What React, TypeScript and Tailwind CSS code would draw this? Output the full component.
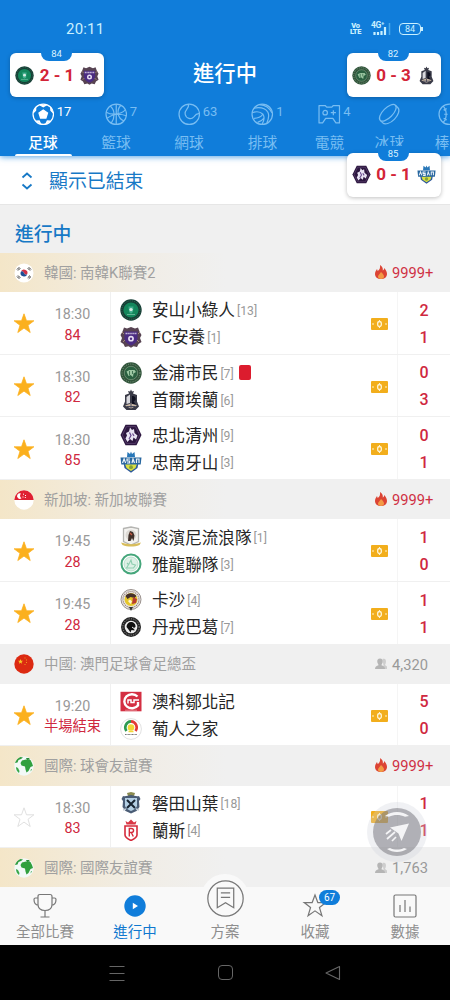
import type { ReactNode } from 'react';
import clsx from 'clsx';

type Team = { name: string; rank?: number; crest: string; score: number; red?: boolean };
type Match = { time: string; minute: string; starred: boolean; teams: [Team, Team] };
type League = {
    name: string;
    flag: string;
    viewers: string;
    hot: boolean;
    matches: Match[];
};

const leagues: League[] = [
    {
        name: '韓國: 南韓K聯賽2',
        flag: 'kr',
        viewers: '9999+',
        hot: true,
        matches: [
            {
                time: '18:30',
                minute: '84',
                starred: true,
                teams: [
                    { name: '安山小綠人', rank: 13, crest: 'ansan', score: 2 },
                    { name: 'FC安養', rank: 1, crest: 'anyang', score: 1 },
                ],
            },
            {
                time: '18:30',
                minute: '82',
                starred: true,
                teams: [
                    { name: '金浦市民', rank: 7, crest: 'gimpo', score: 0, red: true },
                    { name: '首爾埃蘭', rank: 6, crest: 'eland', score: 3 },
                ],
            },
            {
                time: '18:30',
                minute: '85',
                starred: true,
                teams: [
                    { name: '忠北清州', rank: 9, crest: 'cheongju', score: 0 },
                    { name: '忠南牙山', rank: 3, crest: 'asan', score: 1 },
                ],
            },
        ],
    },
    {
        name: '新加坡: 新加坡聯賽',
        flag: 'sg',
        viewers: '9999+',
        hot: true,
        matches: [
            {
                time: '19:45',
                minute: '28',
                starred: true,
                teams: [
                    { name: '淡濱尼流浪隊', rank: 1, crest: 'tampines', score: 1 },
                    { name: '雅龍聯隊', rank: 3, crest: 'geylang', score: 0 },
                ],
            },
            {
                time: '19:45',
                minute: '28',
                starred: true,
                teams: [
                    { name: '卡沙', rank: 4, crest: 'khalsa', score: 1 },
                    { name: '丹戎巴葛', rank: 7, crest: 'tanjong', score: 1 },
                ],
            },
        ],
    },
    {
        name: '中國: 澳門足球會足總盃',
        flag: 'cn',
        viewers: '4,320',
        hot: false,
        matches: [
            {
                time: '19:20',
                minute: '半場結束',
                starred: true,
                teams: [
                    { name: '澳科鄒北記', crest: 'cpk', score: 5 },
                    { name: '葡人之家', crest: 'casa', score: 0 },
                ],
            },
        ],
    },
    {
        name: '國際: 球會友誼賽',
        flag: 'world',
        viewers: '9999+',
        hot: true,
        matches: [
            {
                time: '18:30',
                minute: '83',
                starred: false,
                teams: [
                    { name: '磐田山葉', rank: 18, crest: 'jubilo', score: 1 },
                    { name: '蘭斯', rank: 4, crest: 'reims', score: 1 },
                ],
            },
        ],
    },
    { name: '國際: 國際友誼賽', flag: 'world', viewers: '1,763', hot: false, matches: [] },
];

const crests: Record<string, ReactNode> = {
    ansan: (
        <>
            <circle cx="11" cy="11" r="10.7" fill="#173f36" />
            <circle cx="11" cy="11" r="7.6" fill="#14875c" />
            <circle cx="11" cy="11" r="9.2" fill="none" stroke="#3a7460" strokeWidth=".8" strokeDasharray="1 1.2" />
            <path d="M8.5 7.5h5l-.6 5.5-1.9 1.8-1.9-1.8z" fill="#3fae8c" />
            <circle cx="11" cy="10.6" r="1.7" fill="#d6ece4" />
            <path d="M7 15.5h8" stroke="#62b597" strokeWidth="1" />
        </>
    ),
    anyang: (
        <>
            <path
                d="M4 1.5l3 1L11 1l4 1.5 3-1 1.5 4L21.5 9 20 12l1.5 4-3 2-1.5 3-3.5-.7L11 21.7l-2.5-1.4L5 21l-1.5-3-3-2L2 12 .5 9l2-3.5z"
                fill="#574352"
            />
            <path d="M4.5 5.5h13V12c0 4-3 6-6.5 7.5C7.5 18 4.5 16 4.5 12z" fill="#4b2c82" />
            <path d="M5.5 7.5h11" stroke="#c2b5d6" strokeWidth="1.5" strokeDasharray="1.5 .4" />
            <circle cx="11" cy="12.7" r="2.9" fill="#e5def1" />
            <circle cx="11" cy="12.7" r="1.2" fill="#4b2c82" />
            <path d="M2 6l2 2M20 6l-2 2M3 16l2-2M19 16l-2-2" stroke="#a58a78" strokeWidth="1" />
        </>
    ),
    gimpo: (
        <>
            <circle cx="11" cy="11" r="10.7" fill="#31543b" />
            <circle cx="11" cy="11" r="9" fill="none" stroke="#7f9c80" strokeWidth="1" strokeDasharray="1 1.3" />
            <circle cx="11" cy="11" r="6.7" fill="#2a6040" stroke="#8ca68c" strokeWidth=".6" />
            <path d="M6.500 9.500l3-1.500h5l1.500 2-2.500 1.500-.5 3.500-2.500-2-2 1z" fill="#9cc7a2" />
            <path d="M9.500 9v4M12.500 9v3" stroke="#2a6040" strokeWidth=".8" />
        </>
    ),
    eland: (
        <>
            <path d="M11 .5l1 2 2-.5-1 2.500 4 1.500v6.500l2 5-3.500 3.500h-9L3 17.500l2-5V6l4-1.500L8 2l2 .5z" fill="#3a3b48" />
            <path d="M6.500 8l3.500-2.500V14l-3.500 1z" fill="#d9d9de" />
            <path d="M12 7c3 0 4 2 3.500 4l-2 1.500 2 2.500H12z" fill="#0f1020" />
            <path d="M5 16.500l6-2 6 2-6 3z" fill="#cbb9a5" />
            <path d="M7 17.500h8M11 15v4" stroke="#45485c" strokeWidth="1" />
        </>
    ),
    cheongju: (
        <>
            <path d="M5.500 .8h11L21.500 11l-5 10.200h-11L.5 11z" fill="#2c163f" />
            <path d="M6.500 2.600h9L19.600 11l-4.100 8.400h-9L2.400 11z" fill="none" stroke="#6b5180" strokeWidth=".6" />
            <path d="M10 3.500l2 2.500 2-1 .5 4 3 2.500-1.500 4-2.500-2-1 3.500-2.500-2-2.500 3-2-3.500 1.500-3-1-2.500L9 7.500z" fill="#e8e3f3" />
            <path d="M9.500 8.500l1.500 3-2 3.500M12.500 9.500l1.500 2.500" stroke="#65468c" strokeWidth="1.2" fill="none" />
        </>
    ),
    asan: (
        <>
            <path d="M7.500 1l2.500 2 1-2.500 1 2.500 2.500-2 .5 5h-8z" fill="#2877b8" />
            <path d="M3 9h16l-1.500 8L11 21.800 4.500 17z" fill="#2b579a" />
            <path d="M5 13h12l-1.500 4L11 20l-4.500-3z" fill="#d9df42" />
            <path d="M.5 6.500h21l-.8 7H1.300z" fill="#27669f" />
            <path
                d="M2.500 12l1.600-4 1.500 4M10 8H7v2h2.500v2H7M12 12l1-4 1.500 4M16.500 12V8H19v4"
                stroke="#eef4f8"
                strokeWidth="1.2"
                fill="none"
            />
            <circle cx="11" cy="16.2" r="1.9" fill="#85a13a" />
        </>
    ),
    tampines: (
        <>
            <path d="M3.500 2.500L11 1l7.500 1.500v13L11 19l-7.500-3.500z" fill="#f4f3f0" stroke="#b5b5b2" strokeWidth="1.3" />
            <circle cx="11" cy="9" r="5.5" fill="#dedbd6" />
            <path d="M8 15l.5-6 1.500-4 3 1 1.500 3.500-1 5.500-1.500-3-1.500 3z" fill="#41302a" />
            <path d="M10 7l2 2" stroke="#c95a42" strokeWidth="1.2" />
            <path d="M1 16.500l4 1c4 1 8 1 12 0l4-1-1.500 2.500c-5 2-12 2-17 0z" fill="#d8bd5b" />
        </>
    ),
    geylang: (
        <>
            <circle cx="11" cy="11" r="9.5" fill="#fff" stroke="#45a67b" strokeWidth="2" />
            <circle cx="11" cy="11" r="7" fill="#ddf0e6" stroke="#a7d6bf" strokeWidth=".7" />
            <path d="M6.500 15l3-5 1.500-3 1 4 3.500 1-2 3zM7 10l2 2" fill="none" stroke="#8fceb0" strokeWidth="1.1" />
        </>
    ),
    khalsa: (
        <>
            <circle cx="11" cy="10.5" r="10" fill="#e9e6e3" stroke="#99908c" strokeWidth="1" />
            <circle cx="11" cy="10.5" r="8" fill="none" stroke="#8f7770" strokeWidth="1.2" strokeDasharray="1 1" />
            <circle cx="11" cy="10.5" r="6.5" fill="#e6c62b" />
            <path d="M5.500 7c2-3.500 8-4 11 0l-2 2-4-1-3 2z" fill="#45302b" />
            <path d="M13 8l4 2-1 4-4 1z" fill="#b93b30" />
            <path d="M8 12l2-1.500 2 2-1.500 2.500z" fill="#fff5d5" />
            <path d="M9 18h4l-2 4z" fill="#343434" />
        </>
    ),
    tanjong: (
        <>
            <circle cx="11" cy="11" r="10" fill="#252525" />
            <circle cx="11" cy="11" r="8.2" fill="none" stroke="#999" strokeWidth="1" strokeDasharray="1 1.4" />
            <circle cx="11" cy="11" r="6.3" fill="#eee" />
            <path d="M6.500 11c0-3 2-5 4.500-5s5 2 4.500 5l-1.500 1 .5 2.500-3-.5-1 2.500-2-3z" fill="#111" />
            <path d="M12 11l2 1.500" stroke="#eee" strokeWidth="1" />
        </>
    ),
    cpk: (
        <>
            <rect x=".5" y=".8" width="21" height="19.5" fill="#d42f42" />
            <path d="M17.500 5.500A7.600 7 0 1 0 18 14.500V11" fill="none" stroke="#fff" strokeWidth="2.4" />
            <path d="M8 12.500V9h3v2.500h3V9h5" fill="none" stroke="#fff" strokeWidth="1.5" />
            <path d="M5 19.200h12" stroke="#f0b9bf" strokeWidth=".6" />
        </>
    ),
    casa: (
        <>
            <circle cx="11" cy="11" r="10.4" fill="#fff" stroke="#d4d4d4" strokeWidth=".7" />
            <path d="M6.500 13a6 6 0 0 1 4.500-9.600" fill="none" stroke="#2d9b50" strokeWidth="2.6" />
            <path d="M11 3.400a6 6 0 0 1 4.500 9.600" fill="none" stroke="#e23c35" strokeWidth="2.6" />
            <circle cx="11" cy="9.5" r="3.3" fill="#f2d735" />
            <path d="M8.500 13.500h5" stroke="#f2d735" strokeWidth="1.5" />
            <path d="M5 16.500h12" stroke="#777" strokeWidth="1" strokeDasharray="1 .4" />
        </>
    ),
    jubilo: (
        <>
            <path d="M7 1l4-1 4 1-1 3H8z" fill="#8b8b51" />
            <path d="M3 4c3 1 5-1 8-1s5 2 8 1l1.500 3-1.500 2 .5 6-3 4-5.500 2.500L5.500 19l-3-4L3 9 1.500 7z" fill="#4a5c75" />
            <path d="M5 6h12v8c-1 3-4 4-6 5-2-1-5-2-6-5z" fill="#b4cfe4" />
            <path d="M7 8l8 8M15 8l-8 8" stroke="#172331" strokeWidth="2" />
            <path d="M3 18l3-1M19 18l-3-1" stroke="#c3cdd8" strokeWidth="1.5" />
        </>
    ),
    reims: (
        <>
            <path d="M5.500 2l2.500 1.500L11 .5l3 3L16.500 2l-1 3.500h-9z" fill="#d93745" />
            <path d="M5 7h12v9c0 2.500-3 4-6 5.500C8 20 5 18.500 5 16z" fill="#fff" stroke="#d52b3b" strokeWidth="1.6" />
            <path d="M9.300 17.500v-8h2c3 0 3 4 0 4h-2M11.300 13.500l2 4" fill="none" stroke="#d52b3b" strokeWidth="1.4" />
        </>
    ),
};

const flags: Record<string, ReactNode> = {
    kr: (
        <>
            <circle cx="10" cy="10" r="9.5" fill="#fff" />
            <path d="M6.700 9a3.400 3.400 0 0 1 6.600 2c-1.200 1.200-2.500.7-3.300-1s-2.300-2.200-3.300-1z" fill="#cf3247" />
            <path d="M6.700 9c1-1.200 2.500-.7 3.300 1s2.100 2.200 3.300 1A3.400 3.400 0 0 1 6.700 9z" fill="#1d4d94" />
            <path
                d="M3 6.500l2.300-2.300M4 7.500l2.300-2.300M17 6.500l-2.300-2.300M16 7.500l-2.300-2.300M3 13.500l2.300 2.300M4 12.500l2.300 2.300M17 13.500l-2.300 2.300M16 12.500l-2.300 2.300"
                stroke="#333"
                strokeWidth="1"
            />
        </>
    ),
    sg: (
        <>
            <circle cx="10" cy="10" r="9.7" fill="#fff" />
            <path d="M.3 10a9.700 9.700 0 0 1 19.400 0z" fill="#df2032" />
            <path d="M7 3.500a2.800 2.800 0 1 0 .5 4.800A3 3 0 0 1 7 3.500z" fill="#fff" />
            <path d="M9 4.200h1M11 5.500h1M8.500 7h1M10.800 7.500h1" stroke="#fff" strokeWidth="1" />
        </>
    ),
    cn: (
        <>
            <circle cx="10" cy="10" r="9.7" fill="#dc2a12" />
            <path d="M6.500 5l.7 1.700 1.800.1-1.400 1.200.5 1.800-1.600-1-1.600 1 .5-1.800L4 6.800l1.800-.1z" fill="#f6c927" />
            <path d="M10.500 4h1M12 6h1M12 8.500h1M10.500 10.500h1" stroke="#f6c927" strokeWidth=".7" />
        </>
    ),
    world: (
        <>
            <circle cx="10" cy="10" r="9.7" fill="#f2f9f7" />
            <path d="M1 7c1-3 3-5 5.500-6L9 1.500 7 3 4.500 4 3.500 6.500z" fill="#2e9b3e" />
            <path d="M8 4.500l4-1 4.500.5 1.500 3 1 3-2.500 1-2 4-2 1.500-1-3-.5-3-3.500-1-1-2.500z" fill="#30a03e" />
            <path d="M2 11l2 1 1.500 3-.5 2C3 15.500 2 13.500 2 11zM17 13l1 .5-1.500 2z" fill="#3ba849" />
            <path d="M12 2h3l1 1.500-3 .5z" fill="#268d39" />
        </>
    ),
};

function Crest({ id, className }: { id: string; className: string }) {
    return (
        <svg viewBox="0 0 22 22" className={className}>
            {crests[id]}
        </svg>
    );
}

function StatusBar() {
    return (
        <div className="flex h-[46px] items-center justify-between pt-[12px] pr-[29px] pl-[66px] text-[#c9f0ff]">
            <span className="text-[15px] tracking-[.2px]">20:11</span>
            <div className="flex items-center">
                <div className="mr-[11px] flex flex-col items-center text-[7.5px] leading-[6.5px] font-black tracking-[-.4px]">
                    <span>Vo</span>
                    <span>LTE</span>
                </div>
                <div className="relative mr-[8px] h-[14px] w-[19px]">
                    <span className="absolute -top-[1px] -left-[1px] text-[8.5px] leading-[8px] font-bold tracking-[-.3px]">4G⁺</span>
                    <svg viewBox="0 0 19 14" className="h-[14px] w-[19px]">
                        <path d="M2.500 13v-3M6 13v-3M9.500 13V9M13 13V5" stroke="currentColor" strokeWidth="2.2" />
                        <path d="M17.500 13V1" stroke="#4ba8ea" strokeWidth="1.5" />
                    </svg>
                </div>
                <div className="relative flex h-[12px] w-[22px] items-center justify-center rounded-[4px] border border-current text-[9px] leading-none">
                    84
                    <i className="absolute top-[3px] -right-[3px] h-[4px] w-[2px] bg-current" />
                </div>
            </div>
        </div>
    );
}

type Sport = { name: string; count?: number; width: string; icon: ReactNode };

const sports: Sport[] = [
    {
        name: '足球',
        count: 17,
        width: 'w-[73px]',
        icon: (
            <>
                <circle cx="11" cy="11" r="10" />
                <path d="M11 6.800l4.200 3-1.600 4.900H8.400L6.800 9.800z" fill="currentColor" />
                <path
                    d="M7.500 1.700L11 3.600l3.500-1.900M1.200 9.500l2.300-2.200.2-3.400M20.800 9.500l-2.300-2.200-.2-3.400M4 17.800l3-.3 1.500 3M18 17.800l-3-.3-1.500 3"
                    fill="currentColor"
                />
            </>
        ),
    },
    {
        name: '籃球',
        count: 7,
        width: 'w-[73px]',
        icon: (
            <>
                <circle cx="11" cy="11" r="10" />
                <path d="M11 1v20M1.200 9c5 3 14 2.500 18.500-2M5 3c5 4 5 11 1 17M15.500 2.200C11 7 12 15 18.500 17.500M2 15c5-4 12-5 18.800-2.500" />
            </>
        ),
    },
    {
        name: '網球',
        count: 63,
        width: 'w-[73px]',
        icon: (
            <>
                <circle cx="11" cy="11" r="10" />
                <path d="M10 1c2 4-4 5-3 10 1 4.500 6 5.500 8.500 2.500 1.500-2 3-3.500 5.500-3" />
            </>
        ),
    },
    {
        name: '排球',
        count: 1,
        width: 'w-[74px]',
        icon: (
            <>
                <circle cx="11" cy="11" r="10" />
                <path d="M3 5c6-1 11 0 13.500 4 1.500 3 1 6-1 10.500M1.200 9.500c4-1.500 8-1 10.500 1.500 2 3 1 6.500-1 10M8.500 1.500c5 .5 9.500 3 12 8M11.500 11c-2 3-5 4-8.500 4M13 14.500c-2 2.500-4 3.500-6.500 4.500" />
            </>
        ),
    },
    {
        name: '電競',
        count: 4,
        width: 'w-[60px]',
        icon: (
            <>
                <path d="M1 2.500h6l1.500 1.500h5L15 2.500h6v17h-3.500L14.500 15h-7l-3 4.500H1z" strokeLinejoin="round" />
                <circle cx="7" cy="9.500" r="2.2" />
                <path d="M15 7v5M12.500 9.500h5" />
            </>
        ),
    },
    {
        name: '冰球',
        width: 'w-[60px]',
        icon: (
            <g transform="rotate(-45 11 11)">
                <ellipse cx="11" cy="9" rx="10.5" ry="4.8" />
                <path d="M.5 9v3.500c0 3 4.700 5.500 10.500 5.500s10.500-2.500 10.500-5.500V9" />
            </g>
        ),
    },
    {
        name: '棒球',
        width: 'w-[60px]',
        icon: (
            <>
                <circle cx="11" cy="11" r="10" />
                <path d="M5 3c4 4 4 12 0 16M17 3c-4 4-4 12 0 16M5.500 7l3-1.500M6 11h3.500M5.500 15l3 1.500" />
            </>
        ),
    },
];

function SportTabs() {
    return (
        <div className="flex flex-1 overflow-hidden pl-[6.5px]">
            {sports.map((sport, i) => (
                <div
                    key={sport.name}
                    className={clsx(
                        'flex shrink-0 flex-col items-center pt-[5px]',
                        sport.width,
                        i === 0 ? 'text-white' : 'text-[#78bdf2]',
                    )}
                >
                    <div className="relative">
                        <svg viewBox="0 0 22 22" className="size-[22.5px]" fill="none" stroke="currentColor" strokeWidth="1.2">
                            {sport.icon}
                        </svg>
                        {sport.count !== undefined && (
                            <span className="absolute top-[1px] left-[25px] text-[13px] leading-[15px]">{sport.count}</span>
                        )}
                    </div>
                    <span className={clsx('mt-[7px] text-[14.7px] leading-[20px]', i === 0 && 'font-medium')}>
                        {sport.name}
                    </span>
                    {i === 0 && <i className="mt-auto h-[2px] w-[57px] rounded-t bg-white" />}
                </div>
            ))}
        </div>
    );
}

type FloatProps = { minute: string; home: string; away: string; score: string; className: string };

function FloatingScore({ minute, home, away, score, className }: FloatProps) {
    return (
        <div className={clsx('absolute h-[44px] w-[94px] rounded-[6px] bg-white shadow-[0_1px_4px_rgba(0,0,0,.25)]', className)}>
            <div className="absolute -top-[7px] left-[31px] h-[15px] w-[31px] rounded-b-[8px] bg-[#107dda] text-center text-[9.5px] leading-[15px] text-[#d9f1ff]">
                {minute}
            </div>
            <div className="flex h-full items-center justify-between px-[5px]">
                <Crest id={home} className="size-[19px]" />
                <span className="text-[17px] leading-none font-bold text-[#d32438]">{score}</span>
                <Crest id={away} className="size-[19px]" />
            </div>
        </div>
    );
}

function Star({ filled }: { filled: boolean }) {
    return (
        <svg viewBox="0 0 24 24" className="size-[24px]">
            <path
                d="M12 1.800l2.500 7h7.400l-5.900 4.500 2.200 7.200-6.200-4.400-6.200 4.400L8 13.300 2.100 8.800h7.400z"
                fill={filled ? '#fbb01e' : '#fff'}
                stroke={filled ? '#fbb01e' : '#d8d8d8'}
                strokeWidth=".8"
            />
        </svg>
    );
}

function Pitch() {
    return (
        <svg viewBox="0 0 17 12" className="h-[12px] w-[17px]">
            <rect width="17" height="12" rx="1" fill="#f2ae1c" />
            <ellipse cx="8.500" cy="6" rx="1.9" ry="2.500" fill="none" stroke="#fff3cf" strokeWidth="1.300" />
            <path d="M8.500 2v2M8.500 8v2M2 5v2M15 5v2" stroke="#fff3cf" strokeWidth="1" />
        </svg>
    );
}

function MatchRow({ match }: { match: Match }) {
    return (
        <div className="flex h-[62.7px] shrink-0 border-b border-[#f0f0f0] bg-white">
            <div className="flex w-[48px] items-center justify-center pt-[3px]">
                <Star filled={match.starred} />
            </div>
            <div className="-ml-[13px] flex w-[75px] flex-col items-center justify-center pt-[3.5px] text-[14.3px] leading-[20.5px]">
                <span className="text-[#999]">{match.time}</span>
                <span className="whitespace-nowrap text-[#cf2840]">{match.minute}</span>
            </div>
            <div className="flex flex-1 flex-col justify-center border-l border-[#f0f0f0] pt-px pl-[9px]">
                {match.teams.map((team) => (
                    <div key={team.name} className="flex h-[27px] items-center">
                        <Crest id={team.crest} className="size-[22px]" />
                        <span className="ml-[10px] pt-[3.5px] text-[16.6px] leading-none whitespace-nowrap text-[#262626]">
                            {team.name}
                        </span>
                        {team.rank && (
                            <span className="ml-[2px] pt-[2.5px] text-[12.2px] leading-none text-[#999]">[{team.rank}]</span>
                        )}
                        {team.red && <i className="ml-[5px] h-[15px] w-[12.5px] rounded-[2px] bg-[#dc1c2e]" />}
                    </div>
                ))}
            </div>
            <div className="flex w-[26px] items-center pt-[2px]">
                <Pitch />
            </div>
            <div className="flex w-[53px] flex-col items-center justify-center border-l border-[#f5f5f5] pt-[1.5px] text-[16px] leading-[27px] font-medium text-[#cf2840]">
                {match.teams.map((team) => (
                    <span key={team.name}>{team.score}</span>
                ))}
            </div>
        </div>
    );
}

function LeagueHeader({ league }: { league: League }) {
    return (
        <div
            className={clsx(
                'flex h-[39.1px] shrink-0 items-center bg-[#f0f0f0] pl-[14px]',
                league.flag !== 'cn' && 'bg-linear-to-r from-[#f4e6c8] via-[#f1ede5] via-30% to-[#f0f0f0] to-50%',
            )}
        >
            <svg viewBox="0 0 20 20" className="size-[20px]">
                {flags[league.flag]}
            </svg>
            <span className="ml-[10px] flex-1 pt-[3px] text-[14.5px] leading-none text-[#a0a0a0]">{league.name}</span>
            <div className={clsx('flex w-[75px] items-center pt-px text-[14.7px]', league.hot ? 'text-[#cf2f43]' : 'text-[#999]')}>
                {league.hot ? (
                    <svg viewBox="0 0 12 14" className="mr-[5px] mb-[2px] h-[14px] w-[12px]">
                        <path
                            d="M5 0c3 2 3 4 2.800 5.500C9 5 9 4 9.200 3 11 5 12 7 12 9c0 3-2.500 5-6 5S0 12 0 9c0-2 1-3.500 2-5l.7 2C4.500 5 5.500 3 5 0z"
                            fill="#dc4434"
                        />
                        <path d="M6 7c2 2 3 3 3 4.500C9 13 8 14 6 14s-3-1-3-2.500C3 10 5 9 6 7z" fill="#f39a45" />
                    </svg>
                ) : (
                    <svg viewBox="0 0 12 12" className="mr-[5px] mb-px h-[12px] w-[12px]" fill="#b5b5b5">
                        <path d="M7.500 1c3-.8 4 1 3.300 4L10 7l2 1.500V11H9z" fill="#cecece" />
                        <path d="M5 .5C7 .5 8 2 7.700 4 7.500 5.500 6.500 6 6.500 7.300c2 .6 3.500 1.200 3.500 3.700H0c0-2.500 1.500-3.100 3.500-3.700C3.500 6 2.500 5.500 2.300 4 2 2 3 .5 5 .5z" />
                    </svg>
                )}
                {league.viewers}
            </div>
        </div>
    );
}

function NavItem({ label, active, children }: { label: string; active?: boolean; children: ReactNode }) {
    return (
        <div className={clsx('flex w-[90px] flex-col items-center', active ? 'text-[#0f78cf]' : 'text-[#8e8e8e]')}>
            <div className="relative flex h-[37px] items-center justify-center">{children}</div>
            <span className="text-[14.5px] leading-[18px]">{label}</span>
        </div>
    );
}

function BottomNav() {
    return (
        <nav className="relative z-10 flex h-[58px] shrink-0 bg-[#f9f9f9]">
            <NavItem label="全部比賽">
                <svg viewBox="0 0 24 26" className="h-[26px] w-[24px]" fill="none" stroke="#777" strokeWidth="1.2">
                    <path d="M7 1.500h10c1.500 0 2 .5 2 2v8c0 4-3 6-7 6s-7-2-7-6v-8c0-1.500.5-2 2-2zM5 5H2.500C1.500 5 1 5.500 1 6.500 1 10 2.500 12 5.500 12.500M19 5h2.500c1 0 1.500.5 1.500 1.500 0 3.500-1.500 5.500-4.500 6M12 17.500V24M7.500 24h9" />
                </svg>
            </NavItem>
            <NavItem label="進行中" active>
                <svg viewBox="0 0 22 22" className="size-[22px]">
                    <circle cx="11" cy="11" r="10.7" fill="#107dda" />
                    <path d="M8.800 7.700l5.200 3.300-5.200 3.300z" fill="#fff" />
                </svg>
            </NavItem>
            <NavItem label="方案">
                <div className="absolute -top-[13px] flex size-[48px] items-center justify-center rounded-full bg-[#f9f9f9]">
                    <svg viewBox="0 0 36 36" className="size-[37px]" fill="none" stroke="#777" strokeWidth="1.2">
                        <circle cx="18" cy="18" r="17.2" />
                        <path d="M10 8h16v19l-8-5-8 5zM13.500 12.500h9M13.500 17h9" />
                    </svg>
                </div>
            </NavItem>
            <NavItem label="收藏">
                <svg viewBox="0 0 24 24" className="size-[26px]" fill="none" stroke="#777" strokeWidth="1.1">
                    <path d="M12 1.800l2.600 7H22l-5.900 4.600 2.300 7.600-6.400-4.500L5.600 21l2.300-7.600L2 8.800h7.400z" />
                </svg>
                <span className="absolute top-[3px] left-[17px] h-[15px] w-[21px] rounded-full bg-[#107dda] text-center text-[10px] leading-[15px] text-white">
                    67
                </span>
            </NavItem>
            <NavItem label="數據">
                <svg viewBox="0 0 24 24" className="size-[24px]" fill="none" stroke="#777" strokeWidth="1.2">
                    <rect x="1" y="1" width="22" height="22" rx="1.5" />
                    <path d="M7 11v7M12 6v12M17 12.500V18" />
                </svg>
            </NavItem>
        </nav>
    );
}

export default function App() {
    return (
        <div className="relative flex h-[1000px] w-[450px] flex-col overflow-hidden bg-[#f0f0f0] font-['Roboto','Noto_Sans_CJK_TC',sans-serif]">
            <header className="relative z-10 flex h-[156px] shrink-0 flex-col bg-[#107dda] shadow-[0_1px_6px_rgba(16,125,218,.7)]">
                <StatusBar />
                <h1 className="flex h-[52px] items-center justify-center pt-[3px] text-[21.3px] font-medium text-white">進行中</h1>
                <SportTabs />
            </header>

            <div className="flex h-[49px] shrink-0 items-center border-b border-[#e6e6e6] bg-white pt-[2px] pl-[21px] text-[#1779c6]">
                <svg viewBox="0 0 12 18" className="h-[18px] w-[12px]" fill="none" stroke="currentColor" strokeWidth="1.8">
                    <path d="M1.500 5.500L6 1.500l4.500 4M1.500 12.500l4.500 4 4.500-4" />
                </svg>
                <span className="ml-[16px] pt-[3px] text-[18.9px]">顯示已結束</span>
            </div>
            <h2 className="flex h-[48px] shrink-0 items-center pt-[13px] pl-[15px] text-[18.8px] font-medium text-[#1779c6]">
                進行中
            </h2>

            <main className="flex h-[634px] shrink-0 flex-col overflow-hidden">
                {leagues.map((league) => (
                    <section key={league.name} className="shrink-0">
                        <LeagueHeader league={league} />
                        {league.matches.map((match) => (
                            <MatchRow key={match.teams[0].name} match={match} />
                        ))}
                    </section>
                ))}
            </main>

            <BottomNav />

            <div className="flex h-[55px] shrink-0 items-center bg-black pl-[109px]">
                <svg viewBox="0 0 16 16" className="size-[16px]" stroke="#666" strokeWidth="1">
                    <path d="M.5 1.500h15M.5 8.500h15M.5 15.500h15" />
                </svg>
                <i className="ml-[93px] size-[15px] rounded-[4px] border border-[#666]" />
                <svg viewBox="0 0 16 16" className="ml-[92px] size-[16px]" fill="none" stroke="#666" strokeWidth="1.1">
                    <path d="M14.500 1.500v13L1 8z" strokeLinejoin="round" />
                </svg>
            </div>

            <FloatingScore minute="84" home="ansan" away="anyang" score="2 - 1" className="top-[53px] left-[10px] z-20" />
            <FloatingScore minute="82" home="gimpo" away="eland" score="0 - 3" className="top-[53px] left-[346.5px] z-20" />
            <FloatingScore minute="85" home="cheongju" away="asan" score="0 - 1" className="top-[152.5px] left-[346.5px] z-20" />

            <div className="absolute top-[802px] left-[367px] flex size-[60px] items-center justify-center rounded-full bg-[#cdcfdc]/30">
                <svg viewBox="0 0 48 48" className="size-[48px]">
                    <circle cx="24" cy="24" r="24" fill="#74757d" fillOpacity=".52" />
                    <path d="M12 8c7-5.500 17-5.500 24 0l-4 .8c-5-2.500-11-2.500-16 0zM14 41c6 4 14 4 20 0l-3-1c-4 2-10 2-14 0z" fill="#f4f4f6" />
                    <path d="M17 19.500l19-4L28.500 33l-3-7.500z" fill="#f4f4f6" />
                    <path d="M13 26l5-4M14 31l8-7M19 33l4-4" stroke="#f4f4f6" strokeWidth="1.7" />
                </svg>
            </div>
        </div>
    );
}
